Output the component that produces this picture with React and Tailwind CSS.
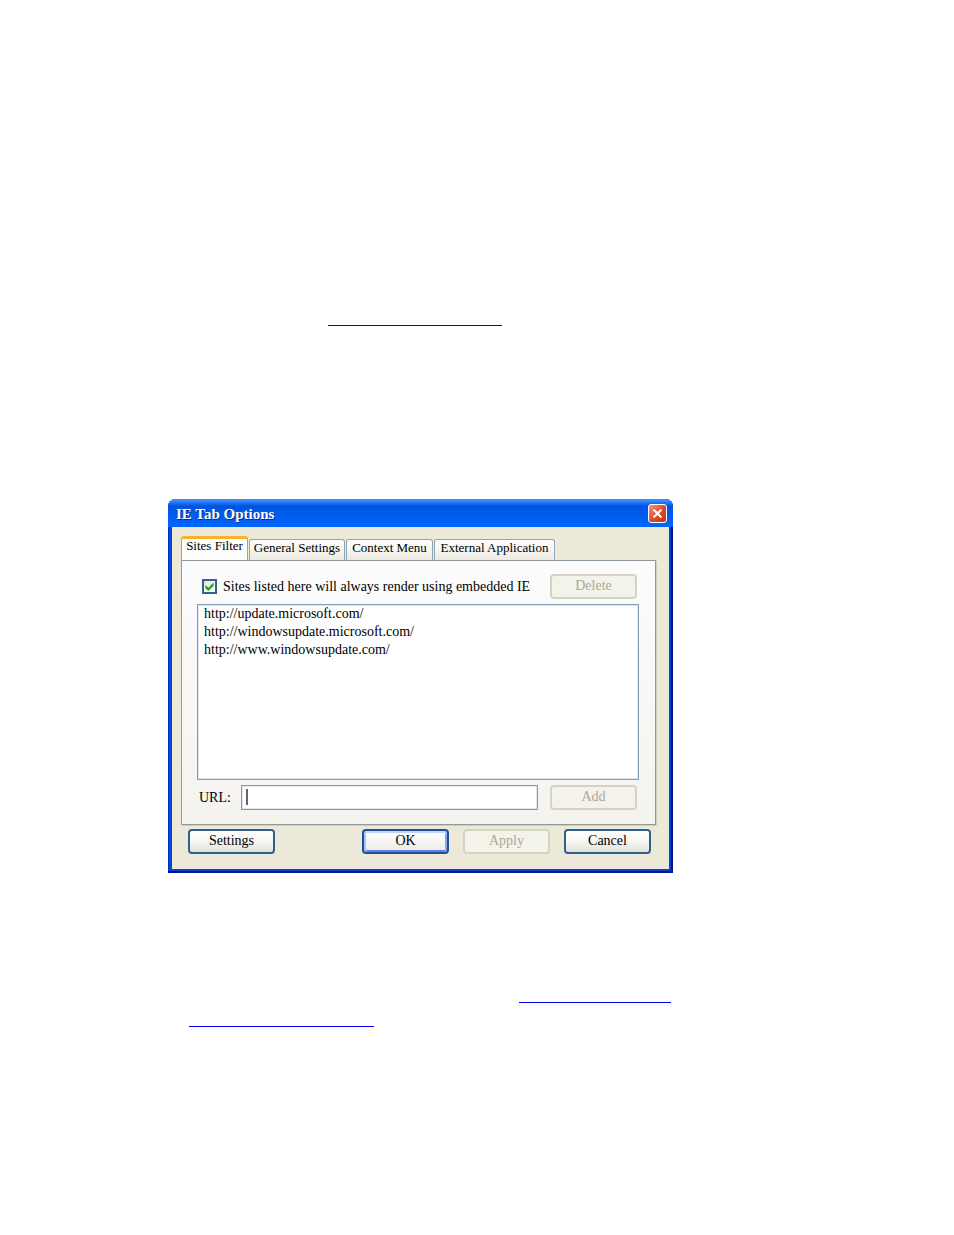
import React, { useState } from 'react';

const tabs = [
  { name: 'Sites Filter', width: 'w-[67px]' },
  { name: 'General Settings', width: 'w-24' },
  { name: 'Context Menu', width: 'w-[87px]' },
  { name: 'External Application', width: 'w-[121px]' },
];

const sites = [
  'http://update.microsoft.com/',
  'http://windowsupdate.microsoft.com/',
  'http://www.windowsupdate.com/',
];

const buttonBase = 'w-[87px] h-[25px] shrink-0 rounded-[4px] pb-[6px] text-center leading-5';
const buttonNormal = 'border-2 border-[#2f5f90] bg-linear-to-b from-white via-[#f5f5f1] to-[#e3e2da] text-black';
const buttonDefault = 'border-2 border-[#1f4f94] bg-linear-to-b from-white to-[#ecebe6] text-black shadow-[inset_0_2px_0_#c0d7fb,inset_2px_0_0_#a4c3f4,inset_-2px_0_0_#86a9ea,inset_0_-2px_0_#5f83dd]';
const buttonDisabled = 'border-2 border-[#d5d3c3] bg-[#f4f3e9] text-[#aaa799]';

const Button = ({ kind = buttonNormal, disabled, children }) => (
  <button type="button" disabled={disabled} className={`${buttonBase} ${disabled ? buttonDisabled : kind}`}>
    {children}
  </button>
);

const TitleBar = () => (
  <div className="flex h-7 items-center justify-between rounded-t-[7px] bg-linear-to-b from-[#3a8cff] from-5% via-[#0054e3] via-25% to-[#0066ff] pl-2 pr-[6px]">
    <h1 className="pt-[2px] text-[15px] leading-5 font-bold text-white [text-shadow:1px_1px_0_#0a2a8c]">IE Tab Options</h1>
    <button type="button" aria-label="Close" className="mt-[1px] flex h-[19px] w-[19px] items-center justify-center rounded-[3px] border border-white bg-linear-to-br from-[#f09a80] via-[#dd4c2b] to-[#c33513]">
      <svg width="11" height="11" viewBox="0 0 11 11" stroke="white" strokeWidth="2.2">
        <path d="M1.5 1.5 L9.5 9.5 M9.5 1.5 L1.5 9.5" />
      </svg>
    </button>
  </div>
);

const OptionsDialog = () => {
  const [active, setActive] = useState(0);
  const [enabled, setEnabled] = useState(true);
  const [url, setUrl] = useState('');

  return (
    <div role="dialog" aria-label="IE Tab Options" className="w-full max-w-[505px] rounded-t-[8px] bg-[#0048d8] shadow-[inset_-2px_-2px_0_#00138c,inset_1px_1px_0_#0031c8]">
      <TitleBar />
      <div className="mx-1 bg-[#ece9d8] pt-[9px] pr-[13px] pb-[15px] pl-[9px]">
        {/* Tabs */}
        <div role="tablist" className="flex h-6 items-end gap-px text-[13px]">
          {tabs.map((tab, i) => (
            <button
              key={tab.name}
              type="button"
              role="tab"
              aria-selected={i === active}
              onClick={() => setActive(i)}
              className={`${tab.width} shrink-0 whitespace-nowrap rounded-t-[3px] border border-b-0 border-[#91a7b4] text-center ${
                i === active
                  ? 'h-6 border-t-[3px] border-t-[#fbb031] bg-[#fdfdfd] pb-2 leading-3'
                  : 'h-[21px] bg-linear-to-b from-white to-[#eceae0] pb-1 leading-4'
              }`}
            >
              {tab.name}
            </button>
          ))}
        </div>

        <div role="tabpanel" className="flex flex-col gap-[5px] border border-[#919b9c] bg-linear-to-b from-[#fcfcfe] to-[#f4f3ee] pt-[13px] pr-4 pb-[14px] pl-[15px] shadow-[1px_1px_0_#d0cebf]">
          <div className="flex items-center justify-between pl-[5px] pr-[2px]">
            <label className="flex items-center gap-[6px]">
              <span className="relative flex h-[15px] w-[15px]">
                <input
                  type="checkbox"
                  checked={enabled}
                  onChange={(e) => setEnabled(e.target.checked)}
                  className="h-[15px] w-[15px] appearance-none border-2 border-[#35618f] bg-linear-to-br from-[#e6e6e0] to-white"
                />
                {enabled && (
                  <svg className="pointer-events-none absolute inset-0" width="15" height="15" viewBox="0 0 15 15">
                    <path d="M3.4 6 L6.4 8.8 L11.6 3.6 V6.8 L6.4 12 L3.4 9.2 Z" fill="#21a121" />
                  </svg>
                )}
              </span>
              Sites listed here will always render using embedded IE
            </label>
            <Button disabled>Delete</Button>
          </div>

          <ul className="h-44 border border-[#7f9db9] bg-white pl-[6px] leading-[18px] shadow-[inset_0_0_0_1px_#dfe8f0]">
            {sites.map((site) => (
              <li key={site}>{site}</li>
            ))}
          </ul>

          <div className="flex items-center pl-[2px] pr-[2px]">
            <label htmlFor="url" className="w-[42px] shrink-0">URL:</label>
            <div className="relative mr-3 h-[25px] flex-1">
              <input
                id="url"
                type="text"
                value={url}
                onChange={(e) => setUrl(e.target.value)}
                className="h-full w-full border border-[#7f9db9] bg-white px-1 shadow-[inset_0_0_0_1px_#dfe8f0] outline-none"
              />
              <span className="pointer-events-none absolute top-1 left-[5px] h-4 w-[2px] bg-[#666666]" />
            </div>
            <Button disabled>Add</Button>
          </div>
        </div>

        <div className="flex justify-between pt-1 pr-[5px] pl-[7px]">
          <Button>Settings</Button>
          <div className="flex gap-[14px]">
            <Button kind={buttonDefault}>OK</Button>
            <Button disabled>Apply</Button>
            <Button>Cancel</Button>
          </div>
        </div>
      </div>
      <div className="h-1" />
    </div>
  );
};

const App = () => {
  return (
    <main className="min-h-screen bg-white px-[168px] pt-[302px] font-['Liberation_Serif',serif] text-[14px] leading-5 text-black">
      <a href="#home" aria-label="Home page" className="ml-40 block h-6 w-[174px] border-b border-[#0000ee]" />
      <div className="pt-[173px] pb-[106px]">
        <OptionsDialog />
      </div>
      <a href="#help" aria-label="Help" className="ml-[351px] block h-6 w-[152px] border-b border-[#0000ee]" />
      <a href="#more" aria-label="More" className="ml-[21px] block h-6 w-[185px] border-b border-[#0000ee]" />
    </main>
  );
};

export default App;
